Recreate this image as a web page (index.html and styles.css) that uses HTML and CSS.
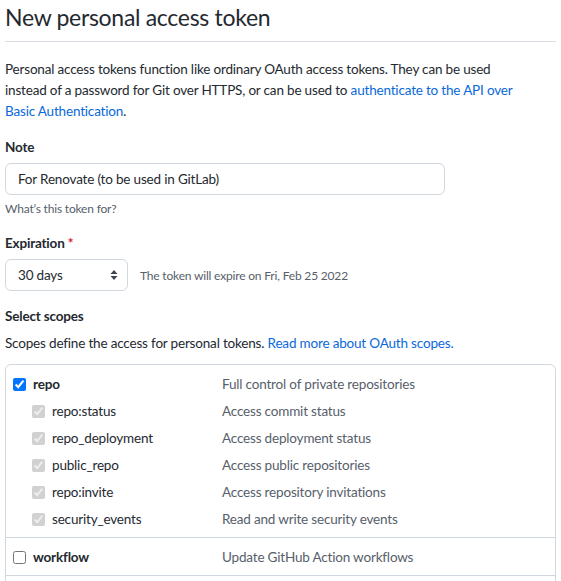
FILE: index.html
```html
<!DOCTYPE html>
<html lang="en">
<head>
<meta charset="utf-8">
<title>New personal access token</title>
<link rel="stylesheet" href="styles.css">
</head>
<body>
<div class="page">
  <h1 class="title">New personal access token</h1>
  <p class="intro">Personal access tokens function like ordinary OAuth access tokens. They can be used instead of a password for Git over HTTPS, or can be used to <a href="#">authenticate to the API over Basic Authentication</a>.</p>

  <div class="field">
    <label class="label" for="note">Note</label>
    <input class="input" id="note" type="text" value="For Renovate (to be used in GitLab)">
    <p class="hint">What’s this token for?</p>
  </div>

  <div class="field">
    <label class="label" for="exp">Expiration <span class="req">*</span></label>
    <div class="exp-row">
      <div class="select-wrap">
        <select class="select" id="exp">
          <option>30 days</option>
        </select>
        <svg class="select-arrows" width="8" height="12" viewBox="0 0 8 12"><path d="M4 1 L7.5 5 H0.5 Z M4 11 L0.5 7 H7.5 Z" fill="#3d444d"/></svg>
      </div>
      <span class="exp-note">The token will expire on Fri, Feb 25 2022</span>
    </div>
  </div>

  <div class="field scopes">
    <div class="label">Select scopes</div>
    <p class="scopes-desc">Scopes define the access for personal tokens. <a href="#">Read more about OAuth scopes.</a></p>
    <div class="scope-box">
      <div class="group">
        <div class="row">
          <label class="name main"><input type="checkbox" checked> repo</label>
          <span class="desc">Full control of private repositories</span>
        </div>
        <div class="row">
          <label class="name sub"><input type="checkbox" checked disabled> repo:status</label>
          <span class="desc">Access commit status</span>
        </div>
        <div class="row">
          <label class="name sub"><input type="checkbox" checked disabled> repo_deployment</label>
          <span class="desc">Access deployment status</span>
        </div>
        <div class="row">
          <label class="name sub"><input type="checkbox" checked disabled> public_repo</label>
          <span class="desc">Access public repositories</span>
        </div>
        <div class="row">
          <label class="name sub"><input type="checkbox" checked disabled> repo:invite</label>
          <span class="desc">Access repository invitations</span>
        </div>
        <div class="row">
          <label class="name sub"><input type="checkbox" checked disabled> security_events</label>
          <span class="desc">Read and write security events</span>
        </div>
      </div>
      <div class="group">
        <div class="row">
          <label class="name main"><input type="checkbox"> workflow</label>
          <span class="desc">Update GitHub Action workflows</span>
        </div>
      </div>
      <div class="group">
        <div class="row">
          <label class="name main"><input type="checkbox"> write:packages</label>
          <span class="desc">Upload packages to GitHub Package Registry</span>
        </div>
      </div>
    </div>
  </div>
</div>
</body>
</html>
```

FILE: styles.css
```css
html, body {
  margin: 0;
  padding: 0;
  background: #ffffff;
}
body {
  font-family: "Lato", "Noto Sans", sans-serif;
  font-size: 13.5px;
  letter-spacing: -0.18px;
  line-height: 21px;
  color: #24292f;
}
a {
  color: #0969da;
  text-decoration: none;
}
.page {
  padding: 0 5px;
}
.title {
  margin: 0;
  font-size: 23px;
  letter-spacing: -0.3px;
  font-weight: 400;
  line-height: 34px;
  padding-bottom: 7px;
  border-bottom: 1px solid #d8dee4;
}
.intro {
  margin: 17px 0 0;
  max-width: 530px;
}
.field {
  margin-top: 15px;
}
.label {
  display: block;
  font-weight: 700;
  margin-bottom: 5px;
}
.req {
  color: #cf222e;
}
.input {
  display: block;
  box-sizing: border-box;
  width: 440px;
  height: 32px;
  margin: 0;
  padding: 0 12px;
  font: inherit;
  letter-spacing: inherit;
  color: #24292f;
  border: 1px solid #d0d7de;
  border-radius: 6px;
  background: #fff;
}
.hint {
  margin: 5px 0 0;
  font-size: 12px;
  line-height: 18px;
  color: #57606a;
}
.exp-row {
  display: flex;
  align-items: center;
  gap: 12px;
}
.select-wrap {
  position: relative;
  width: 123px;
  height: 32px;
}
.select {
  appearance: none;
  -webkit-appearance: none;
  box-sizing: border-box;
  width: 123px;
  height: 32px;
  margin: 0;
  padding: 0 24px 0 12px;
  font: inherit;
  letter-spacing: inherit;
  color: #24292f;
  border: 1px solid #d0d7de;
  border-radius: 6px;
  background: #fff;
}
.select-arrows {
  position: absolute;
  right: 10px;
  top: 10px;
  pointer-events: none;
}
.exp-note {
  font-size: 12px;
  color: #57606a;
}
.scopes .label {
  margin-bottom: 6px;
}
.scopes-desc {
  margin: 0 0 10px;
}
.scope-box {
  border: 1px solid #d0d7de;
  border-radius: 6px;
}
.group {
  padding: 6px 0 4px;
  border-bottom: 1px solid #d0d7de;
}
.group:last-child {
  border-bottom: 0;
}
.row {
  display: flex;
  align-items: center;
  height: 27px;
}
.name {
  display: flex;
  align-items: center;
  box-sizing: border-box;
  width: 216px;
  gap: 7px;
}
.name.main {
  padding-left: 7px;
  font-weight: 700;
}
.name.sub {
  padding-left: 26px;
}
.name input {
  margin: 0;
  width: 13px;
  height: 13px;
}
.desc {
  color: #57606a;
}
```
